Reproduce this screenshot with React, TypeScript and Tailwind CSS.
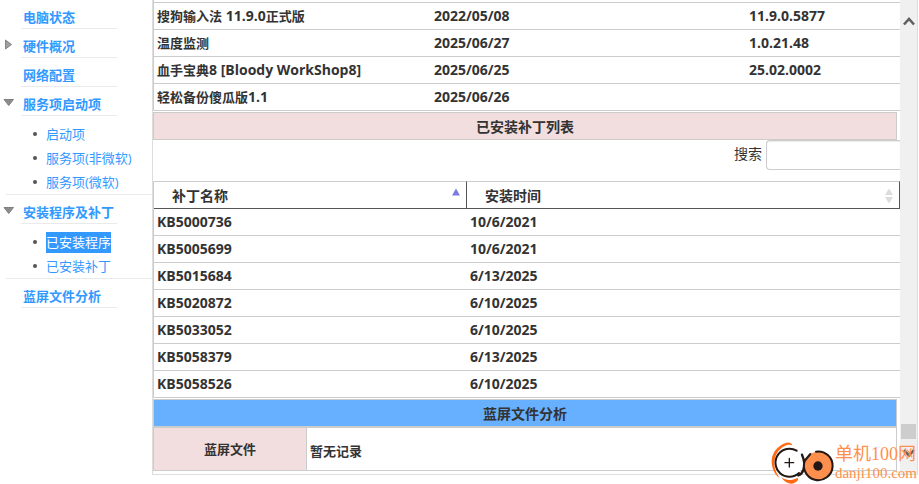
type Program = { name: string; date: string; version: string };
type Patch = { name: string; date: string };

const programs: Program[] = [
  { name: "搜狗输入法 11.9.0正式版", date: "2022/05/08", version: "11.9.0.5877" },
  { name: "温度监测", date: "2025/06/27", version: "1.0.21.48" },
  { name: "血手宝典8 [Bloody WorkShop8]", date: "2025/06/25", version: "25.02.0002" },
  { name: "轻松备份傻瓜版1.1", date: "2025/06/26", version: "" },
];

const patches: Patch[] = [
  { name: "KB5000736", date: "10/6/2021" },
  { name: "KB5005699", date: "10/6/2021" },
  { name: "KB5015684", date: "6/13/2025" },
  { name: "KB5020872", date: "6/10/2025" },
  { name: "KB5033052", date: "6/10/2025" },
  { name: "KB5058379", date: "6/13/2025" },
  { name: "KB5058526", date: "6/10/2025" },
];

type Section = {
  title: string;
  marker?: "open" | "closed";
  children?: string[];
};

const sections: Section[] = [
  { title: "电脑状态" },
  { title: "硬件概况", marker: "closed" },
  { title: "网络配置" },
  { title: "服务项启动项", marker: "open", children: ["启动项", "服务项(非微软)", "服务项(微软)"] },
  { title: "安装程序及补丁", marker: "open", children: ["已安装程序", "已安装补丁"] },
  { title: "蓝屏文件分析" },
];

const selected = "已安装程序";

function Marker({ kind }: { kind?: "open" | "closed" }) {
  return (
    <span className="flex h-[22px] w-[21px] shrink-0 pl-[3px]">
      {kind && (
        <svg className="h-[22px] w-3" viewBox="0 0 12 22" aria-hidden="true">
          {kind === "closed" ? (
            <path d="M2.5 5 L8.5 9.5 L2.5 14 Z" fill="#a0a0a0" stroke="#858585" />
          ) : (
            <path d="M1 6.5 H10.500 L5.700 12.500 Z" fill="#8c8c8c" stroke="#808080" />
          )}
        </svg>
      )}
    </span>
  );
}

function Sidebar() {
  return (
    <nav className="w-[152px] shrink-0 text-[13px] text-[#3399ff]">
      {sections.map((section) => (
        <div key={section.title}>
          <div className="flex pt-1.5">
            <Marker kind={section.marker} />
            <a
              href="#"
              className="block w-24 border-b border-[#eaeaea] pl-0.5 font-bold leading-[22px] whitespace-nowrap"
            >
              {section.title}
            </a>
          </div>
          {section.children && (
            <ul className="ml-1.5 border-b border-[#eaeaea] pt-1.5">
              {section.children.map((child) => (
                <li key={child} className="flex h-6 items-center pl-[27px]">
                  <span className="mr-[9px] size-1 rounded-full bg-[#555]" />
                  <a
                    href="#"
                    className={
                      child === selected
                        ? "bg-[#3399ff] leading-[21px] whitespace-nowrap text-white"
                        : "leading-[21px] whitespace-nowrap"
                    }
                  >
                    {child}
                  </a>
                </li>
              ))}
            </ul>
          )}
        </div>
      ))}
    </nav>
  );
}

function Logo() {
  return (
    <div className="pointer-events-none absolute top-[440px] right-0.5 flex">
      <svg className="h-11 w-16" viewBox="60 180 192 132" fill="none" strokeLinecap="round" aria-hidden="true">
        <path
          d="M124 196 C119 183 105 186 91 195 C71 208 61 226 62 247 C63 267 72 285 86 294 C75 279 69 264 70 247 C71 225 82 209 97 200 C107 194 116 193 124 196 Z"
          fill="#ff6a13"
        />
        <path d="M91 292 C106 303 122 302 140 294 C146 299 134 309 123 311 C109 312 98 303 91 292 Z" fill="#ff6a13" />
        <circle cx="115" cy="247" r="41" fill="#fff" />
        <path d="M137 212 A42 42 0 1 0 144 279" stroke="#231815" strokeWidth="6" />
        <path d="M153 224 C160 240 162 256 157 270 C154 278 149 284 142 286" stroke="#231815" strokeWidth="7" />
        <path d="M115 235 V261 M102 248 H128" stroke="#231815" strokeWidth="4" />
        <circle cx="202" cy="258" r="43" fill="#ff8f4c" />
        <path d="M195 215 A43 43 0 1 1 163 239" stroke="#231815" strokeWidth="6" />
        <path d="M163 240 L178 222" stroke="#231815" strokeWidth="6" />
        <circle cx="201" cy="258" r="14" fill="#231815" />
      </svg>
      <div className="font-['Liberation_Serif','Noto_Sans_CJK_SC',serif] whitespace-nowrap text-[#ff8f4c]">
        <div className="pt-1 text-[18px] leading-5">单机100网</div>
        <div className="pt-px text-[15px] leading-4">danji100.com</div>
      </div>
    </div>
  );
}

function Scrollbar() {
  return (
    <div className="flex w-[17px] shrink-0 flex-col items-center bg-[#f0f0f0] pt-4 pb-[15px]">
      <svg className="h-3 w-3" viewBox="0 0 12 12" fill="none" aria-hidden="true">
        <path d="M1 8.500 L6 3 L11 8.500" stroke="#606060" strokeWidth="2.600" />
      </svg>
      <div className="mt-auto h-[15px] w-[15px] bg-[#cdcdcd]" />
      <svg className="mt-2 h-3 w-3" viewBox="0 0 12 12" fill="none" aria-hidden="true">
        <path d="M1 3 L6 8.500 L11 3" stroke="#606060" strokeWidth="2.600" />
      </svg>
    </div>
  );
}

// Latin letters and digits are set one size larger than the Chinese around them.
function MixedText({ text }: { text: string }) {
  const runs = text.match(/[\x20-\x7e]+|[^\x20-\x7e]+/g) ?? [];
  return (
    <>
      {runs.map((run, i) =>
        /^[\x20-\x7e]/.test(run) ? (
          <span key={i} className="text-sm leading-5">
            {run}
          </span>
        ) : (
          run
        ),
      )}
    </>
  );
}

const cell = "h-[27px] border-b border-[#ccc] p-0 pl-[3px] whitespace-nowrap";

export default function App() {
  return (
    <div className="relative flex items-start bg-white pr-px pb-[9px] font-['Open_Sans','Noto_Sans_CJK_SC',sans-serif] text-[#333]">
      <Sidebar />
      <main className="flex min-w-0 flex-1 border-r border-b border-l border-[#ddd] text-[13px] leading-5">
        <div className="min-w-0 flex-1 overflow-hidden pb-[3px]">
          <div className="h-0.5 border-l border-[#ccc]" />
          <table className="w-full table-fixed border-separate border-spacing-0 border-t border-l border-[#ccc] font-bold">
            <colgroup>
              <col className="w-[277px]" />
              <col className="w-[315px]" />
              <col />
            </colgroup>
            <tbody>
              {programs.map((p) => (
                <tr key={p.name}>
                  <td className={cell}>
                    <MixedText text={p.name} />
                  </td>
                  <td className={cell}>
                    <MixedText text={p.date} />
                  </td>
                  <td className={cell}>
                    <MixedText text={p.version} />
                  </td>
                </tr>
              ))}
            </tbody>
          </table>

          <h2 className="mt-px mr-[3px] h-7 border border-[#ccc] bg-[#f2dede] text-center text-sm leading-7 font-bold">
            已安装补丁列表
          </h2>

          <div className="flex justify-end pb-[11px] text-sm">
            <label htmlFor="patch-search" className="pr-1 leading-7">
              搜索
            </label>
            <input
              id="patch-search"
              type="text"
              className="h-[30px] w-[134px] rounded-l border border-r-0 border-[#ccc] px-2 shadow-[inset_0_1px_1px_rgba(0,0,0,0.08)] outline-none"
            />
          </div>

          <table className="w-full table-fixed border-separate border-spacing-0 border-l border-[#ccc] font-bold">
            <colgroup>
              <col className="w-[313px]" />
              <col />
            </colgroup>
            <thead>
              <tr className="text-left text-sm">
                <th className="h-7 border-t border-r border-b border-t-[#ccc] border-r-[#555] border-b-[#555] p-0 pt-0.5 pr-1 pl-[18px]">
                  <div className="flex items-center justify-between">
                    补丁名称
                    <svg className="mb-2 h-2 w-3" viewBox="0 0 12 8" aria-hidden="true">
                      <path d="M2 7.500 L6 0.500 L10 7.500 Z" fill="#7c7ce0" />
                    </svg>
                  </div>
                </th>
                <th className="h-7 border-t border-r border-b border-t-[#ccc] border-r-[#555] border-b-[#555] p-0 pt-0.5 pr-1 pl-[18px]">
                  <div className="flex items-center justify-between">
                    安装时间
                    <svg className="h-4 w-3" viewBox="0 0 12 16" aria-hidden="true">
                      <path d="M2 7 L6 0.500 L10 7 Z M2 9 L6 15.500 L10 9 Z" fill="#dcdcdc" />
                    </svg>
                  </div>
                </th>
              </tr>
            </thead>
            <tbody>
              {patches.map((p) => (
                <tr key={p.name}>
                  <td className={cell}>
                    <MixedText text={p.name} />
                  </td>
                  <td className={cell}>
                    <MixedText text={p.date} />
                  </td>
                </tr>
              ))}
            </tbody>
          </table>

          <h2 className="mt-px mr-[3px] h-7 border border-[#ccc] bg-[#66b0ff] text-center text-sm leading-7 font-bold">
            蓝屏文件分析
          </h2>
          <div className="mr-[3px]">
            <table className="w-full table-fixed border-separate border-spacing-0 border border-[#ccc] font-bold">
              <tbody>
                <tr>
                  <th scope="row" className="h-[42px] w-[153px] border-r border-[#ccc] bg-[#f2dede] p-0">
                    蓝屏文件
                  </th>
                  <td className="p-0 pt-1 pl-[3px]">暂无记录</td>
                </tr>
              </tbody>
            </table>
          </div>
        </div>
        <Scrollbar />
      </main>
      <Logo />
    </div>
  );
}
